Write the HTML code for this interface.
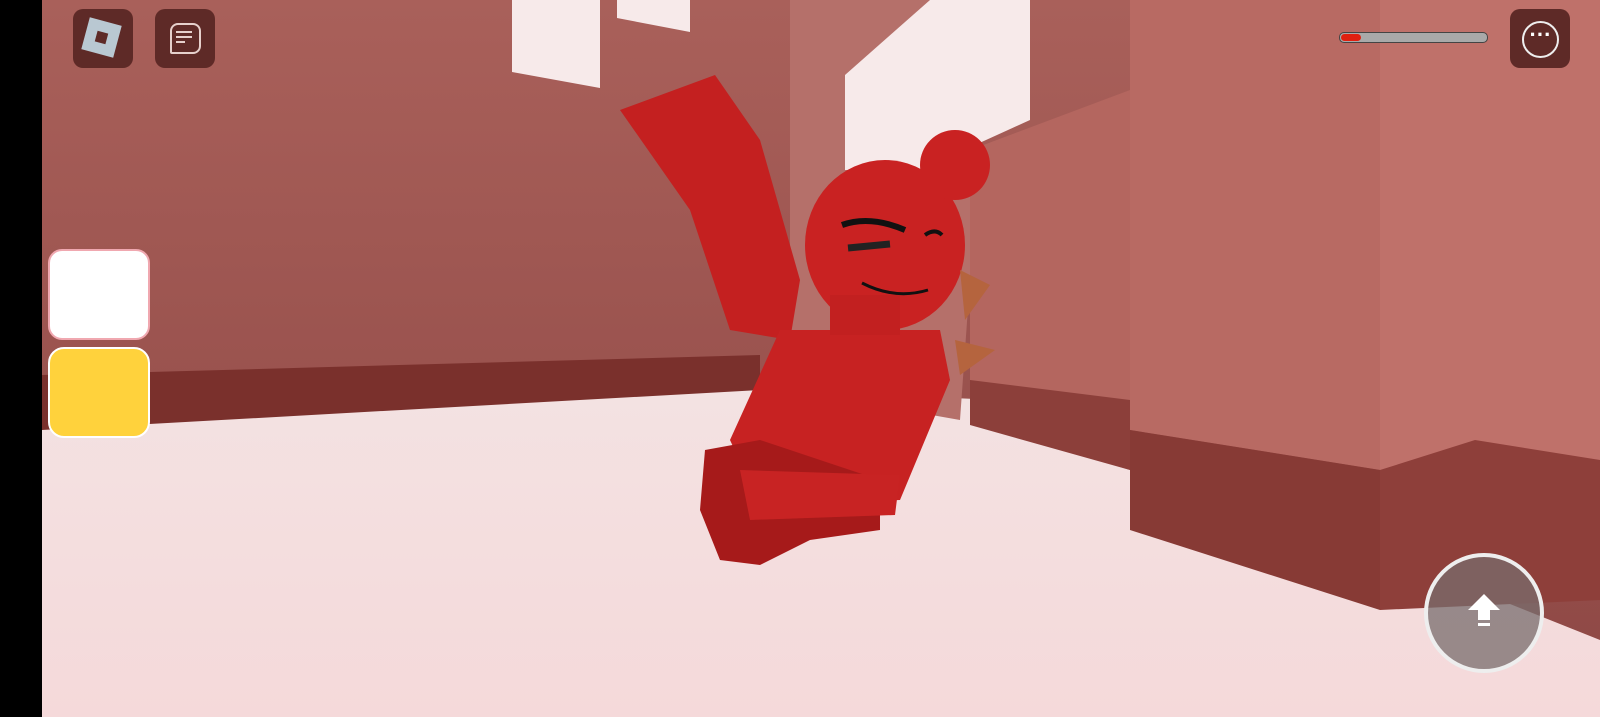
<!DOCTYPE html>
<html><head><style>
body{margin:0;width:1600px;height:717px;overflow:hidden;background:#000;font-family:"Liberation Sans",sans-serif}
.b{position:absolute;border-radius:10px;background:#5e2a27}
</style></head><body>
<svg width="1600" height="717" style="position:absolute;left:0;top:0">
<defs>
<linearGradient id="w" x1="0" y1="0" x2="0" y2="1"><stop offset="0" stop-color="#a9605a"/><stop offset="1" stop-color="#8d4744"/></linearGradient>
<linearGradient id="f" x1="0" y1="0" x2="0" y2="1"><stop offset="0" stop-color="#f3e2e2"/><stop offset="1" stop-color="#f5d9da"/></linearGradient>
</defs>
<rect x="42" y="0" width="1558" height="717" fill="url(#w)"/>
<polygon points="42,375 760,355 760,395 42,430" fill="#7a302c"/>
<polygon points="42,430 760,390 1000,400 1600,640 1600,717 42,717" fill="url(#f)"/>
<polygon points="790,0 1000,0 980,140 960,420 790,390" fill="#b5706a"/>
<polygon points="512,0 600,0 600,88 512,72" fill="#f7eaea"/>
<polygon points="617,0 690,0 690,32 617,18" fill="#f7eaea"/>
<polygon points="845,75 930,0 1030,0 1030,120 920,170 845,170" fill="#f7eaea"/>
<polygon points="970,150 1130,90 1130,470 970,420" fill="#b4665f"/>
<polygon points="970,380 1130,400 1130,470 970,425" fill="#8c3f3a"/>
<polygon points="1130,0 1380,0 1380,470 1130,430" fill="#b86a63"/>
<polygon points="1130,430 1380,470 1380,610 1130,530" fill="#873a35"/>
<polygon points="1380,0 1600,0 1600,470 1380,470" fill="#bf716a"/>
<polygon points="1380,470 1475,440 1600,460 1600,600 1380,610" fill="#8e3f3a"/>
<!-- character -->
<polygon points="620,110 715,75 760,140 800,280 790,340 730,330 690,210" fill="#c42020"/>
<polygon points="780,330 940,330 950,380 900,500 760,505 730,440" fill="#c72222"/>
<polygon points="705,450 760,440 880,480 880,530 810,540 760,565 720,560 700,510" fill="#a61a1a"/>
<polygon points="740,470 900,475 895,515 750,520" fill="#c82323"/>
<ellipse cx="885" cy="245" rx="80" ry="85" fill="#c92222"/>
<ellipse cx="955" cy="165" rx="35" ry="35" fill="#c92222"/>
<rect x="830" y="295" width="70" height="40" fill="#c22020"/>
<polygon points="960,270 990,285 965,320" fill="#b5643e"/>
<polygon points="955,340 995,350 960,375" fill="#b5643e"/>
<path d="M842 225 Q870 215 905 230" stroke="#111" stroke-width="6" fill="none"/>
<path d="M925 235 Q935 228 942 235" stroke="#111" stroke-width="4" fill="none"/>
<path d="M848 248 L890 244" stroke="#222" stroke-width="7"/>
<path d="M862 283 Q895 300 928 290" stroke="#111" stroke-width="3" fill="none"/>
</svg>
<div class="b" style="left:73px;top:9px;width:60px;height:59px"></div>
<div style="position:absolute;left:85px;top:21px;width:33px;height:33px;background:#b9c8d2;transform:rotate(15deg)"><div style="position:absolute;left:11px;top:11px;width:11px;height:11px;background:#5e2a27"></div></div>
<div class="b" style="left:155px;top:9px;width:60px;height:59px"></div>
<div style="position:absolute;left:170px;top:23px;width:27px;height:27px;border:2px solid #e6d0cc;border-radius:8px 8px 8px 2px"></div>
<div style="position:absolute;left:176px;top:31px;width:16px;height:2px;background:#e6d0cc;box-shadow:0 5px 0 #e6d0cc"></div>
<div style="position:absolute;left:176px;top:41px;width:9px;height:2px;background:#e6d0cc"></div>
<div style="position:absolute;left:1339px;top:32px;width:147px;height:9px;border-radius:5px;background:#a9a9a9;border:1px solid #444"></div>
<div style="position:absolute;left:1341px;top:34px;width:20px;height:7px;border-radius:4px;background:#e02010"></div>
<div class="b" style="left:1510px;top:9px;width:60px;height:59px"></div>
<div style="position:absolute;left:1522px;top:21px;width:33px;height:33px;border:2px solid #eee;border-radius:50%;color:#fff;text-align:center;font-size:22px;line-height:24px;font-weight:bold">···</div>
<div style="position:absolute;left:48px;top:249px;width:98px;height:87px;background:#fff;border:2px solid #f0a8b0;border-radius:14px"></div>
<div style="position:absolute;left:48px;top:347px;width:98px;height:87px;background:#ffd23c;border:2px solid #fff;border-radius:16px"></div>
<div style="position:absolute;left:1424px;top:553px;width:120px;height:120px;border-radius:50%;background:rgba(120,110,110,.75);border:4px solid #eee;box-sizing:border-box"></div>
<svg style="position:absolute;left:1466px;top:592px" width="36" height="36"><polygon points="18,2 34,18 24,18 24,28 12,28 12,18 2,18" fill="#fff"/><rect x="12" y="31" width="12" height="3" fill="#fff"/></svg>
</body></html>
